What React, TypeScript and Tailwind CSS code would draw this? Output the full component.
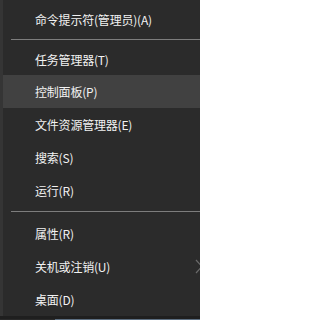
import React from "react";

const font = { fontFamily: '"Noto Sans CJK SC", "Microsoft YaHei", "Liberation Sans", sans-serif' };

function Item({ label, h = "h-[33px]", active = false, children }: { label: string; h?: string; active?: boolean; children?: React.ReactNode }) {
  return (
    <div className={`${h} flex items-center pl-[32px] relative ${active ? "bg-[#414141]" : ""}`}>
      <span className="text-[12px] text-[#f2f2f2] leading-none tracking-[-0.2px]">{label}</span>
      {children}
    </div>
  );
}

export default function App() {
  return (
    <div className="w-[200px] h-[320px] bg-[#2b2b2b] overflow-hidden flex flex-col relative" style={font}>
      <div className="flex flex-col flex-1 border-l-[3px] border-[#353535]">
        <div className="h-[3px]" />
        <Item label="命令提示符(管理员)(A)" />
        <div className="pt-[3px] pb-[4px] pl-[8px]">
          <div className="h-px bg-[#7d7d7d]" />
        </div>
        <Item label="任务管理器(T)" h="h-[31px]" />
        <Item label="控制面板(P)" active />
        <Item label="文件资源管理器(E)" />
        <Item label="搜索(S)" />
        <Item label="运行(R)" />
        <div className="pt-[4px] pb-[5px] pl-[8px]">
          <div className="h-px bg-[#7d7d7d]" />
        </div>
        <Item label="属性(R)" />
        <Item label="关机或注销(U)">
          <svg className="absolute right-[-4px] top-[9px]" width="10" height="15" viewBox="0 0 10 15">
            <path d="M2 1 L8 7.5 L2 14" fill="none" stroke="#6a6a6a" strokeWidth="1.2" />
          </svg>
        </Item>
        <Item label="桌面(D)" />
        <div className="flex-1" />
      </div>
      <div className="h-[4px] bg-[#1f1f1f]" />
      <div className="h-[2px] flex">
        <div className="w-[55px] bg-[#2a2a2a]" />
        <div className="flex-1 bg-[#5d6f82]" />
      </div>
    </div>
  );
}
